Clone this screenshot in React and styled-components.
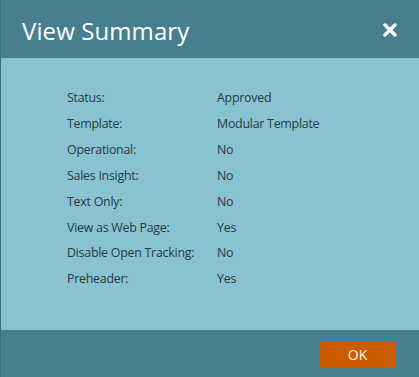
import React from "react";
import styled, { createGlobalStyle } from "styled-components";

const Global = createGlobalStyle`
  html, body { margin: 0; padding: 0; }
  body { font-family: "Open Sans", "Liberation Sans", sans-serif; }
`;

const Dialog = styled.div`
  width: 419px;
  height: 377px;
  display: flex;
  flex-direction: column;
  background: #477f90;
  border-left: 1px solid #3f6d78;
  box-sizing: border-box;
`;

const Header = styled.div`
  height: 58px;
  display: flex;
  align-items: center;
  justify-content: space-between;
  padding: 0 21px 0 21px;
  box-sizing: border-box;
`;

const Title = styled.h1`
  margin: 0;
  font-size: 24px;
  font-weight: 400;
  color: #ffffff;
  letter-spacing: 0.1px;
  padding-top: 3px;
`;

const Close = styled.button`
  border: none;
  background: none;
  padding: 0;
  width: 16px;
  height: 16px;
  display: flex;
  align-items: center;
  justify-content: center;
  cursor: pointer;
  margin-top: 2px;
`;

const Body = styled.div`
  flex: 1;
  background: #89c3d2;
  padding: 27px 0 0 66px;
  box-sizing: border-box;
`;

const Grid = styled.div`
  display: grid;
  grid-template-columns: 150px auto;
`;

const Cell = styled.div`
  font-size: 12.4px;
  letter-spacing: -0.25px;
  line-height: 25.9px;
  color: #263a40;
`;

const Footer = styled.div`
  height: 47px;
  display: flex;
  align-items: center;
  justify-content: flex-end;
  padding-right: 24px;
  box-sizing: border-box;
`;

const OkButton = styled.button`
  width: 75px;
  height: 26px;
  border: none;
  background: #cc5c00;
  color: #fff4e6;
  font-family: "Open Sans", "Liberation Sans", sans-serif;
  font-size: 14px;
  padding: 0;
  margin-top: 2px;
`;

const rows = [
  ["Status:", "Approved"],
  ["Template:", "Modular Template"],
  ["Operational:", "No"],
  ["Sales Insight:", "No"],
  ["Text Only:", "No"],
  ["View as Web Page:", "Yes"],
  ["Disable Open Tracking:", "No"],
  ["Preheader:", "Yes"],
];

export default function App() {
  return (
    <>
      <Global />
      <Dialog>
        <Header>
          <Title>View Summary</Title>
          <Close aria-label="Close">
            <svg width="14" height="14" viewBox="0 0 14 14">
              <path d="M2 2 L12 12 M12 2 L2 12" stroke="#fff" strokeWidth="3.4" strokeLinecap="round" />
            </svg>
          </Close>
        </Header>
        <Body>
          <Grid>
            {rows.map(([k, v]) => (
              <React.Fragment key={k}>
                <Cell>{k}</Cell>
                <Cell>{v}</Cell>
              </React.Fragment>
            ))}
          </Grid>
        </Body>
        <Footer>
          <OkButton>OK</OkButton>
        </Footer>
      </Dialog>
    </>
  );
}
